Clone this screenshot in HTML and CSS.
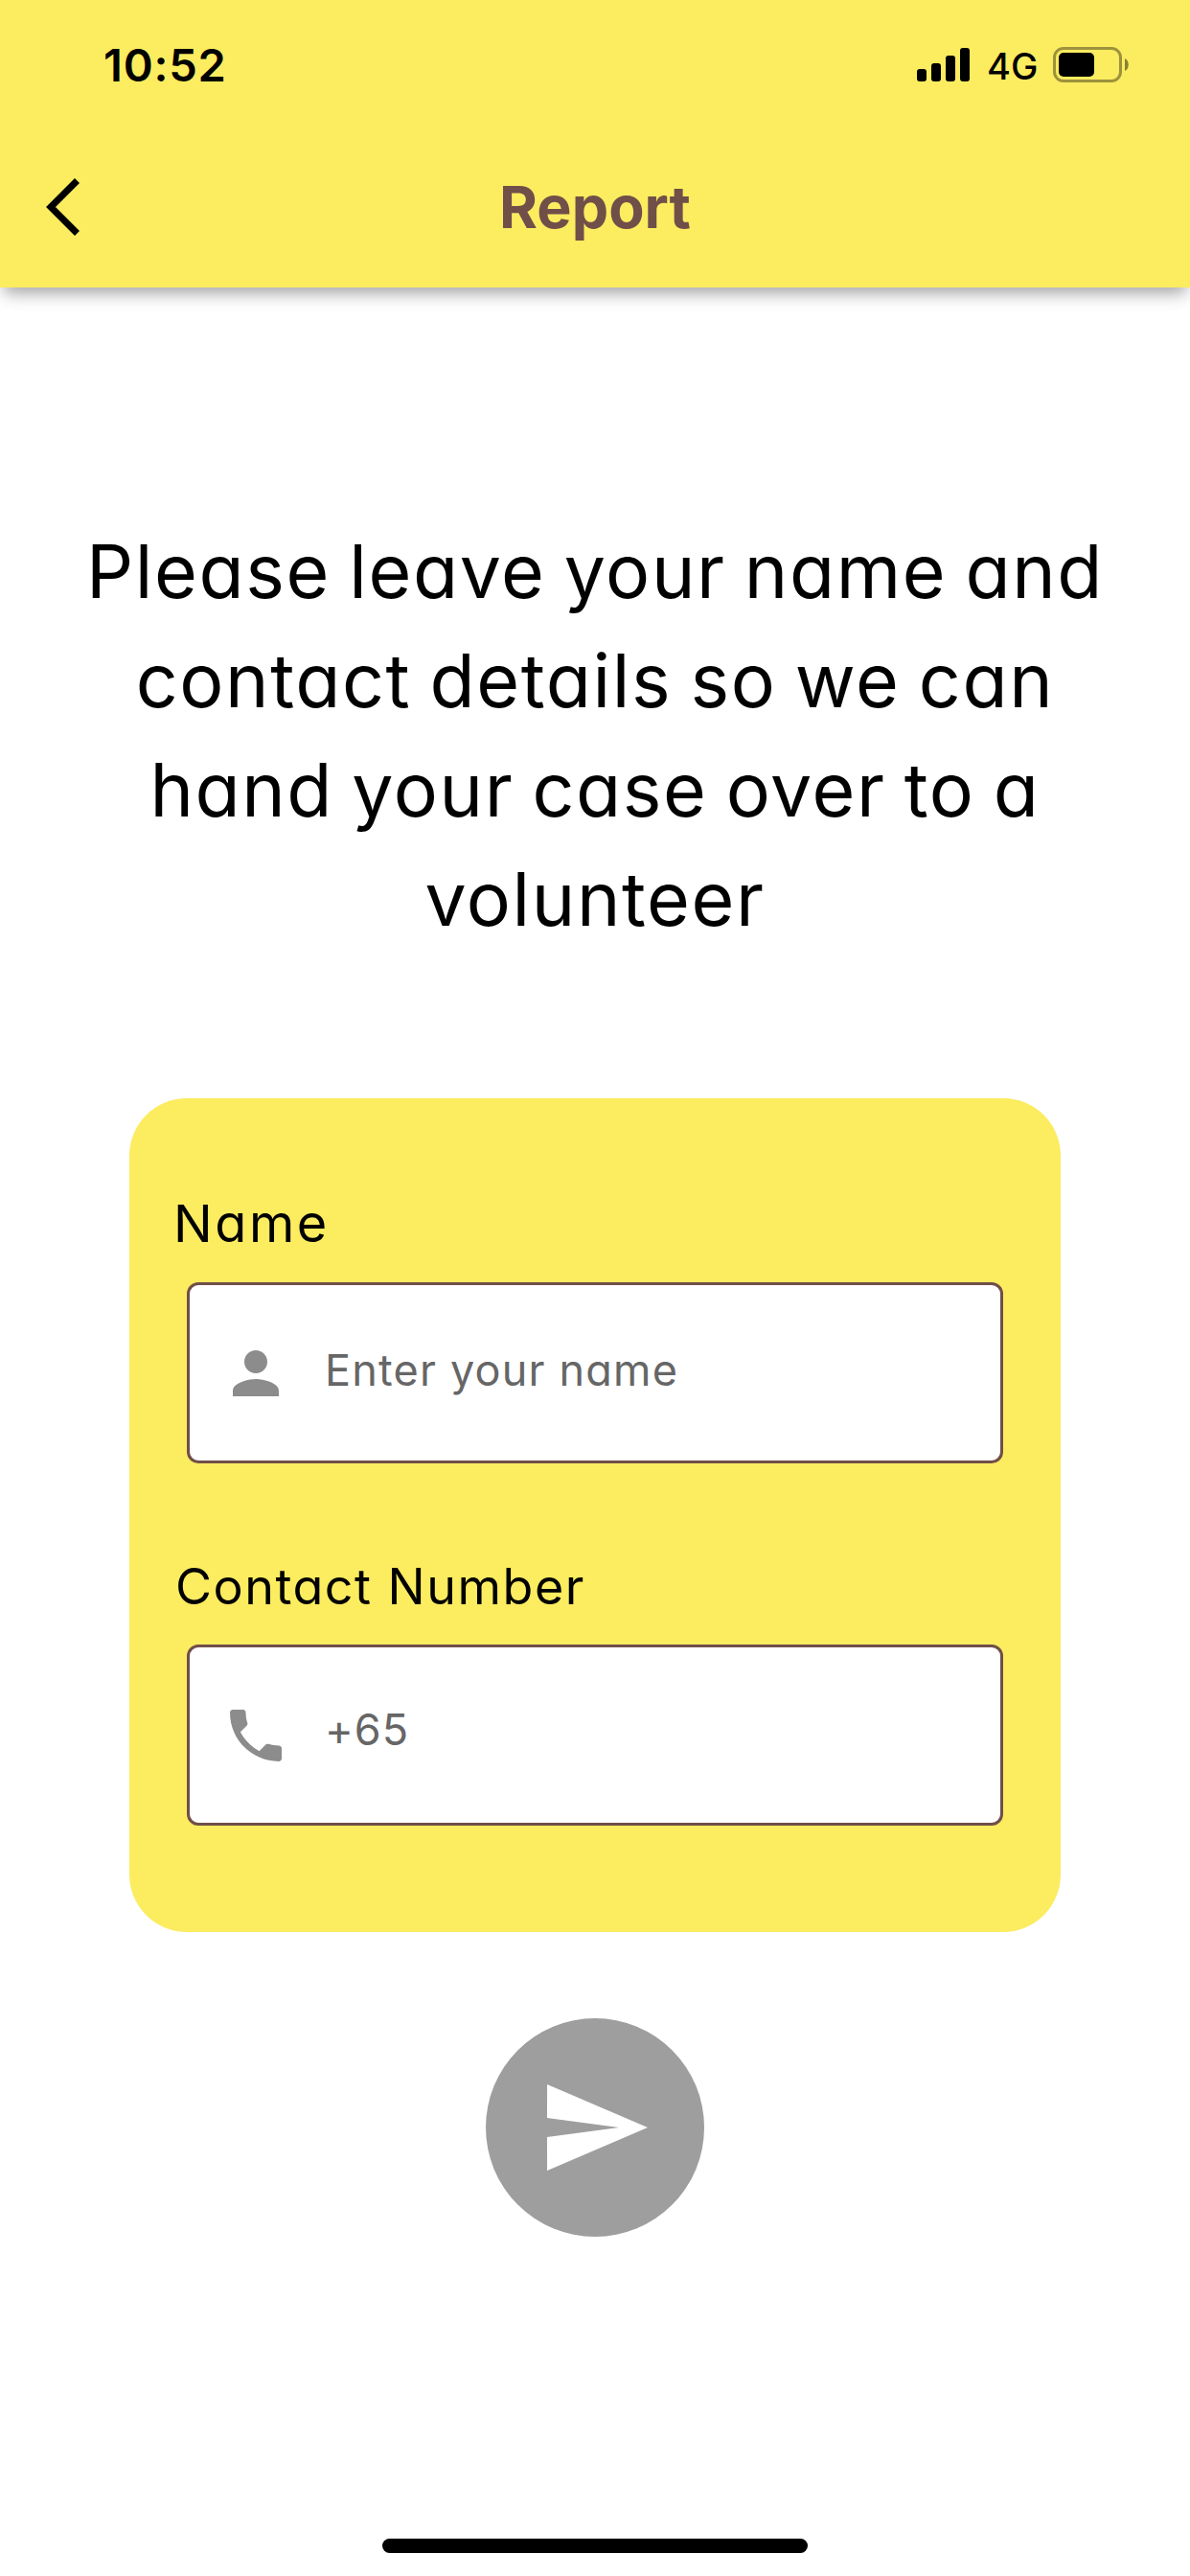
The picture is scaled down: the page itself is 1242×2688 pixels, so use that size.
FILE: index.html
```html
<!DOCTYPE html>
<html lang="en">
<head>
<meta charset="utf-8">
<title>Report</title>
<link rel="stylesheet" href="styles.css">
</head>
<body>
<div class="screen">
  <header class="header">
    <div class="status">
      <span class="time">10:52</span>
      <div class="indicators">
        <svg class="signal" viewBox="0 0 55 35" aria-hidden="true"><rect x="0" y="22" width="10" height="13" rx="3"/><rect x="15" y="16" width="10" height="19" rx="3"/><rect x="30" y="8" width="10" height="27" rx="3"/><rect x="45" y="0" width="10" height="35" rx="3"/></svg>
        <span class="network">4G</span>
        <svg class="battery" viewBox="0 0 80 37" aria-hidden="true"><rect class="battery-shell" x="1.5" y="1.5" width="69" height="34" rx="9.5"/><rect x="6" y="6" width="37" height="25" rx="5"/><path class="battery-cap" d="M75 12c5 2 5 11 0 13z"/></svg>
      </div>
    </div>
    <nav class="bar">
      <svg class="back" viewBox="0 0 36 60" aria-label="Back"><path d="M32.500 2.500 5 30l27.500 27.500"/></svg>
      <h1 class="title">Report</h1>
    </nav>
  </header>
  <main class="content">
    <p class="intro">
      <span class="line">Please leave your name and</span>
      <span class="line">contact details so we can</span>
      <span class="line">hand your case over to a</span>
      <span class="line">volunteer</span>
    </p>
    <form class="card">
      <label class="label label-name">Name</label>
      <div class="field">
        <svg class="icon" viewBox="0 0 24 24"><path d="M12 12c2.210 0 4-1.790 4-4s-1.790-4-4-4-4 1.790-4 4 1.790 4 4 4zm0 2c-2.670 0-8 1.340-8 4v2h16v-2c0-2.660-5.330-4-8-4z"/></svg>
        <span class="hint hint-name">Enter your name</span>
      </div>
      <label class="label label-contact">Contact Number</label>
      <div class="field">
        <svg class="icon" viewBox="0 0 24 24"><path d="M6.620 10.790c1.440 2.830 3.760 5.140 6.590 6.590l2.200-2.200c.27-.27.67-.36 1.020-.24 1.120.37 2.330.57 3.570.57.55 0 1 .45 1 1V20c0 .55-.45 1-1 1-9.390 0-17-7.610-17-17 0-.55.45-1 1-1h3.500c.55 0 1 .45 1 1 0 1.250.2 2.450.57 3.570.11.35.03.74-.25 1.020l-2.200 2.200z"/></svg>
        <span class="hint hint-phone">+65</span>
      </div>
    </form>
    <button class="send" type="button" aria-label="Send"><svg viewBox="0 0 24 24"><path d="M2.010 21 23 12 2.010 3 2 10l15 2-15 2z"/></svg></button>
  </main>
  <div class="home-bar"></div>
</div>
</body>
</html>
```
FILE: styles.css
```css
* { box-sizing: border-box; }

body {
  margin: 0;
  background: #fff;
  color: #000;
  font-family: Inter, "Open Sans", sans-serif;
  font-feature-settings: "cv11";
}

.screen {
  display: flex;
  flex-direction: column;
  width: 1242px;
  height: 2688px;
  overflow: hidden;
}

.header {
  height: 300px;
  flex: none;
  background: #fcec60;
  box-shadow: 0 10px 16px -4px rgba(0, 0, 0, .36);
}

.status {
  display: flex;
  justify-content: space-between;
  height: 132px;
  padding: 0 63px 0 108px;
}

.time {
  font-size: 47px;
  font-weight: 600;
  line-height: 136px;
  letter-spacing: .8px;
}

.indicators {
  display: flex;
  align-items: flex-start;
}

.signal { width: 55px; height: 35px; margin-top: 50px; }

.network {
  width: 51px;
  margin: 0 18px;
  font-size: 38px;
  font-weight: 500;
  line-height: 138px;
  white-space: nowrap;
}

.battery { width: 80px; height: 37px; margin-top: 49px; }
.battery-shell { fill: none; stroke: #9c923b; stroke-width: 3; }
.battery-cap { fill: #8a8134; }

.bar {
  display: grid;
  grid-template-columns: 84px 1fr 84px;
  height: 168px;
  align-items: start;
}

.back {
  width: 36px;
  height: 60px;
  margin: 54px 0 0 48px;
  fill: none;
  stroke: #000;
  stroke-width: 7;
}

.title {
  margin: 0;
  color: #704f49;
  font-size: 61px;
  font-weight: 700;
  line-height: 168px;
  text-align: center;
}

.content {
  display: flex;
  flex: 1;
  flex-direction: column;
  align-items: center;
  padding-top: 239px;
}

.intro {
  margin: 0;
  font-size: 77px;
  letter-spacing: 1.6px;
  line-height: 114px;
  text-align: center;
  white-space: nowrap;
  word-spacing: -4px;
}

.line { display: block; }

.card {
  display: flex;
  flex-direction: column;
  width: 972px;
  height: 870px;
  margin-top: 151px;
  padding: 92px 60px 0;
  border-radius: 60px;
  background: #fcec60;
}

.label {
  height: 100px;
  margin-left: -14px;
  font-weight: 400;
  line-height: 80px;
}

.label-name { font-size: 54px; line-height: 78px; letter-spacing: 2.6px; }
.label-contact { margin: 89px 0 0 -12px; font-size: 52px; line-height: 79px; letter-spacing: 1.5px; }

.field {
  display: flex;
  align-items: center;
  height: 189px;
  padding-left: 33px;
  border: 3px solid #704f49;
  border-radius: 12px;
  background: #fff;
}

.icon { width: 72px; height: 72px; fill: #8c8c8c; }

.hint {
  margin-left: 36px;
  color: #666;
  font-size: 45px;
  line-height: 60px;
}

.hint-name { padding-bottom: 5px; letter-spacing: 1.2px; }
.hint-phone { padding-bottom: 11px; letter-spacing: 1px; }

.send {
  display: flex;
  align-items: center;
  justify-content: center;
  width: 228px;
  height: 228px;
  margin-top: 90px;
  padding: 0;
  border: 0;
  border-radius: 50%;
  background: #9e9e9e;
}

.send svg { width: 120px; height: 120px; fill: #fff; }

.home-bar {
  width: 444px;
  height: 15px;
  margin: 0 auto 24px;
  border-radius: 8px;
  background: #000;
}
```
